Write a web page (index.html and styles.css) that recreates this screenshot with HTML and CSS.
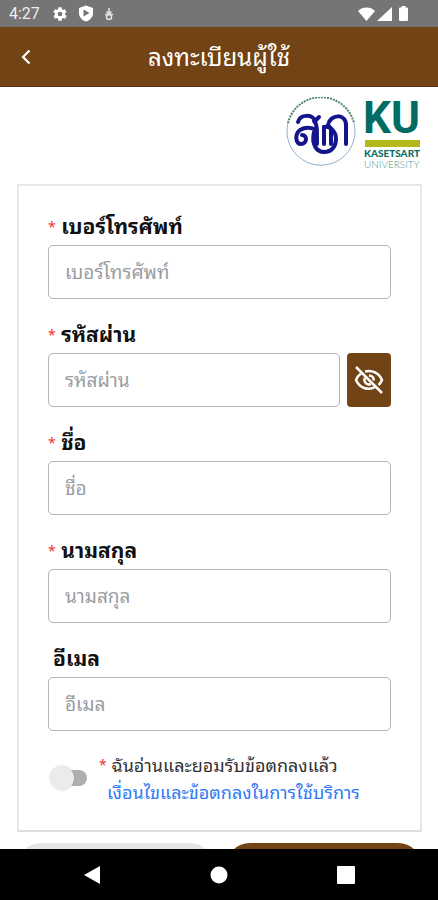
FILE: index.html
```html
<!DOCTYPE html>
<html lang="th">
<head>
    <meta charset="UTF-8">
    <meta name="viewport" content="width=device-width, initial-scale=1.0">
    <title>ลงทะเบียนผู้ใช้</title>
    <link rel="stylesheet" href="styles.css">
</head>
<body>

<div class="status-bar">
    <div class="status-left">
        <span class="clock">4:27</span>
        <svg width="16" height="16" viewBox="0 0 24 24" fill="#fff"><path fill-rule="evenodd" d="M19.4 13a7.500 7.500 0 0 0 0-2l2.100-1.700a.5.5 0 0 0 .1-.6l-2-3.500a.5.5 0 0 0-.6-.2l-2.500 1a7.300 7.300 0 0 0-1.700-1l-.4-2.600a.5.5 0 0 0-.5-.4h-4a.5.5 0 0 0-.5.4l-.4 2.600a7.300 7.300 0 0 0-1.700 1l-2.500-1a.5.5 0 0 0-.6.2l-2 3.500a.5.5 0 0 0 .1.600L4.600 11a7.500 7.500 0 0 0 0 2l-2.100 1.700a.5.5 0 0 0-.1.600l2 3.500c.1.200.4.300.6.200l2.500-1a7.300 7.300 0 0 0 1.700 1l.4 2.600c0 .2.2.4.5.4h4c.3 0 .5-.2.5-.4l.4-2.600a7.300 7.300 0 0 0 1.700-1l2.500 1c.2.1.5 0 .6-.2l2-3.500a.5.5 0 0 0-.1-.6zM12 8.500a3.500 3.500 0 1 1 0 7 3.500 3.500 0 0 1 0-7z"/></svg>
        <svg width="16" height="17" viewBox="0 0 16 17"><path d="M8 0.500 15 3v5c0 4.200-3 7.300-7 8.500C4 15.300 1 12.200 1 8V3z" fill="#fff"/><path d="M5.500 4.500 11.500 8 5.500 11.500z" fill="#757575"/></svg>
        <svg width="10" height="14" viewBox="0 0 10 14" fill="none" stroke="#e4e4e4" stroke-width="1.500"><path d="M5 1v6M2.500 4.500 5 7l2.500-2.500M1 7.500h8"/><circle cx="5" cy="10" r="2.500"/></svg>
    </div>
    <div class="status-right">
        <svg width="17" height="14" viewBox="0 0 17 14" fill="#fff"><path d="M0 4C4.500-.6 12.500-.6 17 4L8.500 14z"/></svg>
        <svg width="15" height="14" viewBox="0 0 15 14" fill="#fff"><path d="M15 0v14H0z"/></svg>
        <svg class="battery" width="9" height="15" viewBox="0 0 9 15" fill="#fff"><path d="M2.500 0h4v1.500H8a1 1 0 0 1 1 1V14a1 1 0 0 1-1 1H1a1 1 0 0 1-1-1V2.500a1 1 0 0 1 1-1h1.500z"/></svg>
    </div>
</div>

<header class="header">
    <button class="back" type="button" aria-label="ย้อนกลับ">
        <svg width="12" height="16" viewBox="0 0 12 16" fill="none" stroke="#fff" stroke-width="2.200"><path d="M9.500 1.500 3 8l6.500 6.500"/></svg>
    </button>
    <h1>ลงทะเบียนผู้ใช้</h1>
</header>

<main class="content">
    <div class="logos">
        <svg width="70" height="70" viewBox="0 0 70 70">
            <path d="M2 26A34 34 0 0 1 68 26" fill="none" stroke="#4d8670" stroke-width="2" stroke-dasharray="2 1"/>
            <path d="M2 26A34 34 0 1 0 68 26" fill="none" stroke="#8faed0" stroke-width="1"/>
            <g fill="none" stroke="#14148c" stroke-width="4" stroke-linecap="round" stroke-linejoin="round">
                <path d="M12 25C14 17 27 17 29 24L33 20M28 24C31 27 31 30 31 47M31 34C27 30 19 30 14 33C8 38 10 47 15 47C21 47 22 38 16 38"/>
                <path d="M28 35C25 48 31 55 38 55C46 55 50 49 50 42C50 34 44 29 38 30"/>
                <path d="M38 30V47"/>
                <path d="M45 47V32L42 28C44 17 60 16 60 28V47"/>
            </g>
        </svg>
        <svg width="58" height="74" viewBox="0 0 58 74">
            <text class="ku" x="-1" y="36">KU</text>
            <rect x="1" y="43" width="55" height="7" fill="#b3b81c"/>
            <text class="ku-name" x="0" y="60">KASETSART</text>
            <text class="ku-sub" x="0" y="71">UNIVERSITY</text>
        </svg>
    </div>

    <form>
        <div class="card">
            <div class="field">
                <label for="phone"><span class="required">*</span> เบอร์โทรศัพท์</label>
                <input type="tel" id="phone" placeholder="เบอร์โทรศัพท์">
            </div>
            <div class="field">
                <label for="password"><span class="required">*</span> รหัสผ่าน</label>
                <div class="password-row">
                    <input type="password" id="password" placeholder="รหัสผ่าน">
                    <button class="toggle-password" type="button" aria-label="แสดงรหัสผ่าน">
                        <svg width="30" height="30" viewBox="0 0 30 30" fill="none" stroke="#fff" stroke-width="2.500">
                            <path d="M11 6.500C18 4.500 25 8 28 15c-.8 2-2 3.700-3.500 5M7 8.500C4.800 10 3 12.300 2 15c3.500 8 12 11 19 7"/>
                            <path d="M15 10.500c3 0 5 2 4.800 5M10.800 13c-1.500 4 2.200 7.500 6 6"/>
                            <path d="M2 2l26 26"/>
                        </svg>
                    </button>
                </div>
            </div>
            <div class="field">
                <label for="firstname"><span class="required">*</span> ชื่อ</label>
                <input type="text" id="firstname" placeholder="ชื่อ">
            </div>
            <div class="field">
                <label for="lastname"><span class="required">*</span> นามสกุล</label>
                <input type="text" id="lastname" placeholder="นามสกุล">
            </div>
            <div class="field">
                <label class="optional" for="email">อีเมล</label>
                <input type="email" id="email" placeholder="อีเมล">
            </div>
            <div class="terms">
                <input class="switch" type="checkbox" id="accept">
                <div class="terms-text">
                    <label for="accept"><span class="required">*</span> ฉันอ่านและยอมรับข้อตกลงแล้ว</label>
                    <a href="#">เงื่อนไขและข้อตกลงในการใช้บริการ</a>
                </div>
            </div>
        </div>
        <div class="actions">
            <button class="btn" type="button" aria-label="ยกเลิก"></button>
            <button class="btn btn-primary" type="submit" aria-label="ลงทะเบียน"></button>
        </div>
    </form>
</main>

<nav class="nav-bar">
    <button type="button" aria-label="Back"><svg width="18" height="20" viewBox="0 0 18 20" fill="#fff"><path d="M17 1v18L1 10z"/></svg></button>
    <button type="button" aria-label="Home"><svg width="18" height="18" viewBox="0 0 18 18" fill="#fff"><circle cx="9" cy="9" r="8.500"/></svg></button>
    <button type="button" aria-label="Recent"><svg width="18" height="18" viewBox="0 0 18 18" fill="#fff"><rect width="18" height="18" rx="1"/></svg></button>
</nav>

</body>
</html>
```
FILE: styles.css
```css
* {
    box-sizing: border-box;
}
body {
    margin: 0;
    height: 100vh;
    display: flex;
    flex-direction: column;
    background-color: #fff;
    font-family: "Noto Sans Thai Looped", "Noto Looped Thai", Loma, Waree, Garuda, "Noto Sans", sans-serif;
    color: #333;
}
button {
    border: none;
    padding: 0;
    background: none;
    cursor: pointer;
}
svg {
    display: block;
}
.status-bar {
    flex: none;
    height: 27px;
    padding: 0 30px 0 9px;
    display: flex;
    justify-content: space-between;
    align-items: center;
    background-color: #757575;
    color: #eee;
}
.status-left {
    display: flex;
    align-items: center;
    gap: 10px;
}
.clock {
    font-family: Roboto, sans-serif;
    font-size: 16px;
    margin-right: 2px;
}
.status-right {
    display: flex;
    align-items: center;
    gap: 2px;
}
.battery {
    margin-left: 5px;
}
.header {
    flex: none;
    height: 60px;
    display: grid;
    grid-template-columns: 52px 1fr 52px;
    align-items: center;
    background-color: #724314;
    border-bottom: 1px solid #5c2f0c;
}
.back {
    height: 100%;
    display: flex;
    align-items: center;
    justify-content: center;
}
.header h1 {
    margin: 0;
    padding-bottom: 4px;
    font-size: 24px;
    font-weight: 400;
    line-height: 40px;
    text-align: center;
    color: #fff;
}
.content {
    flex: 1;
    min-height: 0;
    overflow: hidden;
    padding: 10px 16px 0 17px;
}
.logos {
    height: 87px;
    display: flex;
    justify-content: flex-end;
    gap: 8px;
}
.ku {
    font-family: Roboto, sans-serif;
    font-size: 44px;
    font-weight: 700;
    fill: #006c63;
}
.ku-name,
.ku-sub {
    font-family: Lato, sans-serif;
    font-size: 10px;
    font-weight: 900;
    fill: #0b6f67;
}
.ku-sub {
    font-weight: 300;
    fill: #4d9690;
}
.card {
    padding: 28px 29px 25px;
    border: 2px solid #e6e8e8;
    border-bottom-color: #dcdfdf;
}
.field {
    margin-bottom: 23px;
}
.field label {
    display: block;
    height: 26px;
    margin-bottom: 5px;
    line-height: 22px;
    font-size: 21px;
    font-weight: 700;
    color: #111;
}
.field .optional {
    padding-left: 5px;
}
.required {
    color: #f03434;
    font-size: 14px;
    font-weight: 400;
    line-height: 1;
    vertical-align: 2px;
}
.field input {
    display: block;
    width: 100%;
    height: 54px;
    padding: 0 16px 4px;
    border: 1px solid #b3b5b8;
    border-radius: 5px;
    background-color: #fff;
    font: inherit;
    font-size: 19px;
}
.field input::placeholder {
    color: #999ca2;
    opacity: 1;
}
.password-row {
    display: flex;
    gap: 7px;
}
.password-row input {
    flex: 1;
    min-width: 0;
}
.toggle-password {
    flex: none;
    width: 44px;
    height: 54px;
    display: flex;
    align-items: center;
    justify-content: center;
    border-radius: 4px;
    background-color: #724314;
}
.terms {
    display: flex;
    align-items: center;
    gap: 12px;
    margin-top: -3px;
    padding-left: 2px;
}
.switch {
    appearance: none;
    flex: none;
    width: 37px;
    height: 24px;
    margin: 0;
    display: flex;
    align-items: center;
}
.switch::before {
    content: "";
    flex: none;
    width: 24px;
    height: 24px;
    border-radius: 50%;
    background-color: #ebebeb;
    box-shadow: 0 0 2px rgba(0,0,0,0.2);
    z-index: 1;
}
.switch::after {
    content: "";
    flex: none;
    width: 25px;
    height: 16px;
    margin-left: -12px;
    border-radius: 8px;
    background-color: #afafaf;
}
.terms-text {
    font-size: 18px;
    line-height: 27px;
    white-space: nowrap;
}
.terms-text label,
.terms-text a {
    display: block;
    height: 27px;
}
.terms-text a {
    padding-left: 8px;
    color: #2f7bf6;
    text-decoration: none;
}
.actions {
    display: flex;
    gap: 12px;
    padding: 11px 0 0;
}
.btn {
    flex: 1;
    height: 48px;
    border-radius: 24px;
    background-color: #e4e6e6;
}
.btn-primary {
    background-color: #724314;
}
.nav-bar {
    flex: none;
    height: 51px;
    padding: 0 28px;
    display: grid;
    grid-template-columns: repeat(3, 1fr);
    align-items: center;
    justify-items: center;
    background-color: #000;
}
```
